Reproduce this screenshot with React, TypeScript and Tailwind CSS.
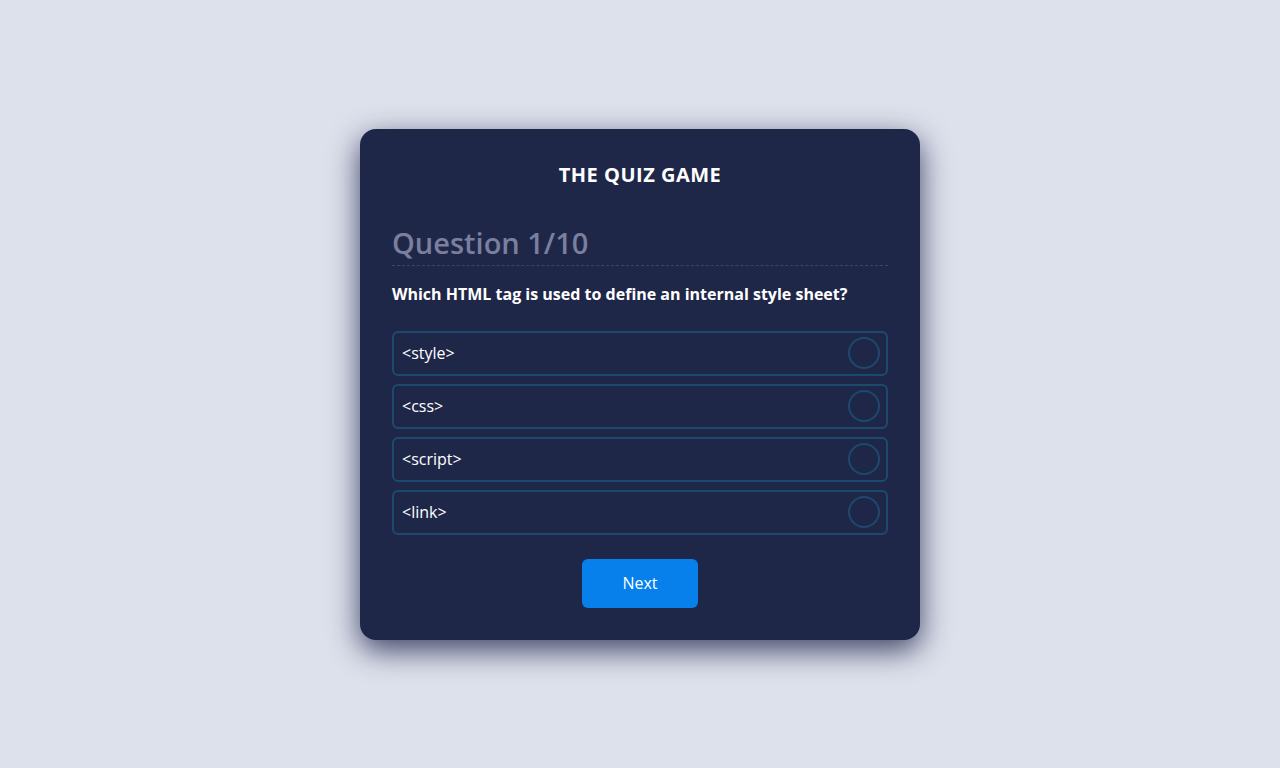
import { useState } from "react"

const options = ["<style>", "<css>", "<script>", "<link>"]

export default function App() {
  const [picked, setPicked] = useState<number | null>(null)

  return (
    <div className="min-h-screen w-full bg-[#dde1ec] flex items-center justify-center font-['Open_Sans',_sans-serif]">
      <div className="w-[560px] rounded-2xl bg-[#1f2749] px-8 pt-8 pb-[32px] shadow-[0_10px_30px_rgba(22,27,68,0.8)]">
        {/* title */}
        <h1 className="text-center text-xl leading-7 font-bold tracking-wide text-white">
          THE QUIZ GAME
        </h1>

        {/* question header */}
        <h2 className="mt-9 pb-1 text-[29px] leading-9 font-semibold text-[#7b7f9d] border-b border-dashed border-[#3d4567]">
          Question 1/10
        </h2>

        <p className="mt-4 text-base leading-6 font-bold text-white">
          Which HTML tag is used to define an internal style sheet?
        </p>

        {/* answers */}
        <div className="mt-[25px] flex flex-col gap-2">
          {options.map((opt, i) => (
            <button
              key={opt}
              onClick={() => setPicked(i)}
              className="flex h-[45px] w-full items-center justify-between rounded-md border-2 border-[#1c4a6e] pl-[8px] pr-[6px] text-left text-base text-white"
            >
              <span>{opt}</span>
              <span
                className={
                  "h-8 w-8 rounded-full border-2 border-[#1c4a6e] " +
                  (picked === i ? "bg-[#0780ec]" : "")
                }
              />
            </button>
          ))}
        </div>

        {/* next */}
        <div className="mt-[24px] flex justify-center">
          <button className="h-[49px] w-[116px] rounded-md bg-[#0780ec] text-base text-white">
            Next
          </button>
        </div>
      </div>
    </div>
  )
}
